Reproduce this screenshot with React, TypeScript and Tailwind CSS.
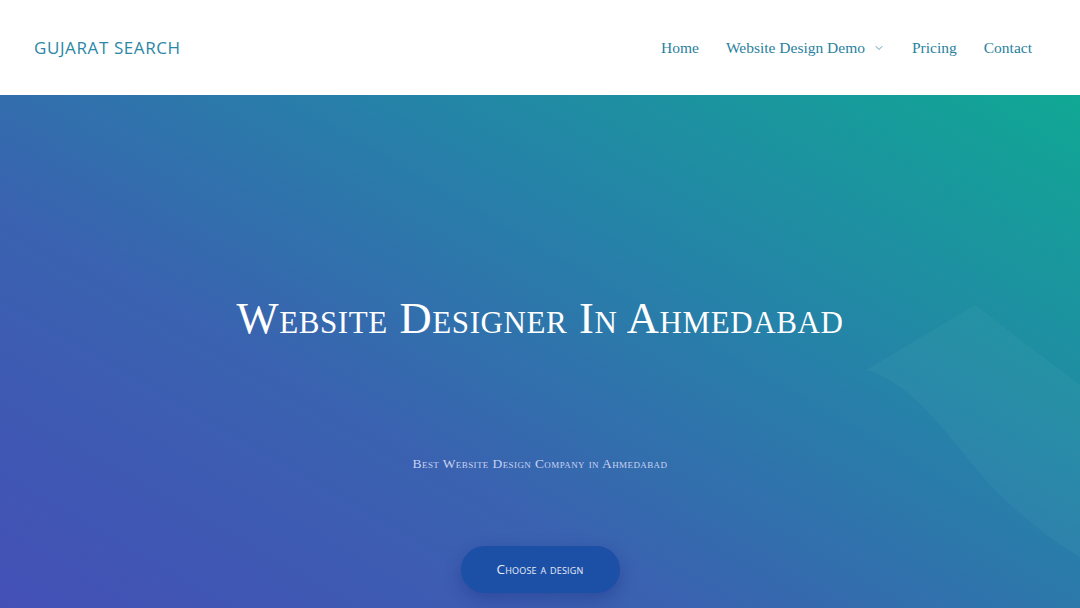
import { ChevronDown } from "lucide-react";

const navItems = [
  { label: "Home" },
  { label: "Website Design Demo", dropdown: true },
  { label: "Pricing" },
  { label: "Contact" },
];

function Header() {
  return (
    <header className="flex h-[95px] items-center justify-between bg-white pl-[34px] pr-[48px]">
      <a
        href="#"
        className="text-[17px] tracking-[0.6px] text-[#2b87a6] [font-family:'Open_Sans',sans-serif]"
      >
        GUJARAT SEARCH
      </a>
      <nav className="flex items-center gap-[27px] text-[15.5px] text-[#2a7f9e] [font-family:'Liberation_Serif',serif]">
        {navItems.map((item) => (
          <a key={item.label} href="#" className="flex items-center gap-[8px]">
            {item.label}
            {item.dropdown ? <ChevronDown className="h-3 w-3" strokeWidth={1.5} /> : null}
          </a>
        ))}
      </nav>
    </header>
  );
}

function Hero() {
  return (
    <section className="relative h-[513px] overflow-hidden bg-[linear-gradient(30deg,#4450b6_0%,#3a62b0_35%,#2583a8_65%,#10a894_100%)]">
      <svg
        className="pointer-events-none absolute inset-0 h-full w-full"
        viewBox="0 0 1080 513"
        preserveAspectRatio="none"
      >
        <path
          d="M975 210 L866 275 C920 290 960 360 1000 400 C1030 430 1060 450 1080 462 L1080 290 Z"
          fill="#9fe8e0"
          fillOpacity="0.05"
        />
      </svg>
      <div className="relative flex flex-col items-center pt-[201px] text-center">
        <h1 className="text-[44.5px] leading-none tracking-[0.6px] text-white [font-variant:small-caps] [font-family:'Liberation_Serif',serif]">
          Website Designer In Ahmedabad
        </h1>
        <p className="mt-[113px] text-[13.5px] tracking-[0.4px] text-[#c9d2f2] [font-variant:small-caps] [font-family:'Liberation_Serif',serif]">
          Best Website Design Company in Ahmedabad
        </p>
        <a
          href="#"
          className="mt-[72px] flex h-[47px] w-[159px] items-center justify-center rounded-full bg-[#1c4fa6] text-[13.5px] tracking-[0.2px] text-white/90 shadow-[0_6px_16px_rgba(20,40,120,0.35)] [font-variant:small-caps] [font-family:'Open_Sans',sans-serif]"
        >
          Choose a design
        </a>
      </div>
    </section>
  );
}

export default function App() {
  return (
    <div className="h-[608px] w-full overflow-hidden">
      <Header />
      <Hero />
    </div>
  );
}
